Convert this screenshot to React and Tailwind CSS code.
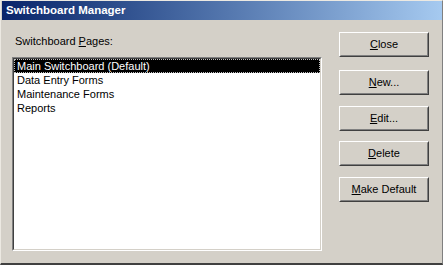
import React from "react";

function Btn({ children, className = "" }) {
  return (
    <div
      className={
        "w-[90px] h-[25px] border border-t-white border-l-white border-r-[#404040] border-b-[#404040] " +
        className
      }
    >
      <div className="w-full h-full flex items-center justify-center border border-t-[#D4D0C8] border-l-[#D4D0C8] border-r-[#808080] border-b-[#808080] text-[11px] text-black">
        {children}
      </div>
    </div>
  );
}

export default function App() {
  const items = ["Main Switchboard (Default)", "Data Entry Forms", "Maintenance Forms", "Reports"];
  return (
    <div
      className="w-[443px] h-[265px] bg-[#D4D0C8] flex flex-col overflow-hidden border-t border-l border-t-[#ECE9E2] border-l-[#ECE9E2] border-b-2 border-b-[#404040] border-r border-r-[#808080]"
      style={{ fontFamily: '"Liberation Sans", Arial, sans-serif' }}
    >
      <div className="h-[19px] ml-[1px] bg-gradient-to-r from-[#0A246A] to-[#A6CAF0] flex items-center pl-[4px]">
        <span className="text-white font-bold text-[11.5px] leading-none">Switchboard Manager</span>
      </div>
      <div className="flex flex-1 pt-[12px] pl-[11px]">
        <div className="flex flex-col">
          <div className="mt-[2px] h-[14px] leading-[14px] text-[11px] text-black pl-[3px]">
            Switchboard <span className="underline">P</span>ages:
          </div>
          <div className="mt-[9px] w-[310px] h-[194px] border border-t-[#808080] border-l-[#808080] border-r-white border-b-white">
            <div className="w-full h-full bg-white border border-t-[#404040] border-l-[#404040] border-r-[#D4D0C8] border-b-[#D4D0C8] pt-[0px]">
              {items.map((it, i) => (
                <div
                  key={it}
                  className={
                    "h-[14px] leading-[12px] text-[11px] pl-[2px] " +
                    (i === 0
                      ? "bg-black text-white border border-dotted border-[#C0C0C0]"
                      : "text-black border border-transparent")
                  }
                >
                  {it}
                </div>
              ))}
            </div>
          </div>
        </div>
        <div className="flex flex-col ml-[17px]">
          <Btn>
            <span className="underline">C</span>lose
          </Btn>
          <Btn className="mt-[13px]">
            <span className="underline">N</span>ew...
          </Btn>
          <Btn className="mt-[11px]">
            <span className="underline">E</span>dit...
          </Btn>
          <Btn className="mt-[10px]">
            <span className="underline">D</span>elete
          </Btn>
          <Btn className="mt-[11px]">
            <span className="underline">M</span>ake Default
          </Btn>
        </div>
      </div>
    </div>
  );
}
